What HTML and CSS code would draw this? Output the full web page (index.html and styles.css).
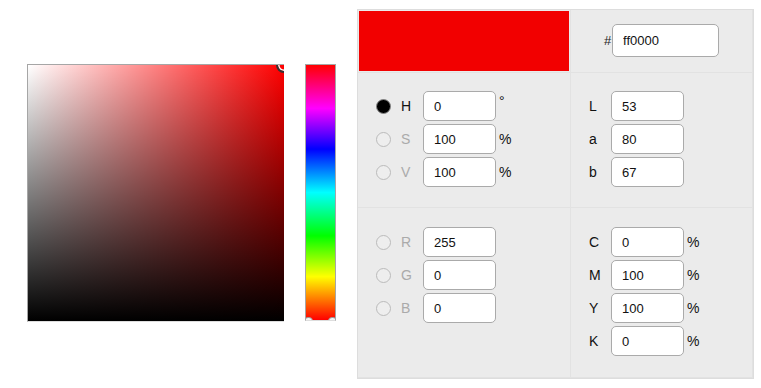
FILE: index.html
```html
<!DOCTYPE html>
<html lang="en">
<head>
    <meta charset="UTF-8">
    <meta name="viewport" content="width=device-width, initial-scale=1.0">
    <title>Color picker</title>
    <link rel="stylesheet" href="styles.css">
</head>
<body>
    <div class="picker">
        <div class="sv-box">
            <span class="sv-marker"></span>
        </div>

        <div class="hue-bar">
            <span class="hue-arrow left"></span>
            <span class="hue-arrow right"></span>
        </div>

        <div class="panel">
            <div class="cell swatch-cell">
                <div class="swatch"></div>
            </div>
            <div class="cell hex-cell">
                <span class="hash">#</span>
                <input class="field hex" type="text" value="ff0000">
            </div>

            <div class="cell group">
                <div class="row">
                    <span class="radio checked"></span>
                    <span class="label">H</span>
                    <input class="field" type="text" value="0">
                    <span class="unit deg">°</span>
                </div>
                <div class="row">
                    <span class="radio"></span>
                    <span class="label off">S</span>
                    <input class="field" type="text" value="100">
                    <span class="unit">%</span>
                </div>
                <div class="row">
                    <span class="radio"></span>
                    <span class="label off">V</span>
                    <input class="field" type="text" value="100">
                    <span class="unit">%</span>
                </div>
            </div>
            <div class="cell group">
                <div class="row">
                    <span class="label">L</span>
                    <input class="field" type="text" value="53">
                </div>
                <div class="row">
                    <span class="label">a</span>
                    <input class="field" type="text" value="80">
                </div>
                <div class="row">
                    <span class="label">b</span>
                    <input class="field" type="text" value="67">
                </div>
            </div>

            <div class="cell group lower">
                <div class="row">
                    <span class="radio"></span>
                    <span class="label off">R</span>
                    <input class="field" type="text" value="255">
                </div>
                <div class="row">
                    <span class="radio"></span>
                    <span class="label off">G</span>
                    <input class="field" type="text" value="0">
                </div>
                <div class="row">
                    <span class="radio"></span>
                    <span class="label off">B</span>
                    <input class="field" type="text" value="0">
                </div>
            </div>
            <div class="cell group lower">
                <div class="row">
                    <span class="label">C</span>
                    <input class="field" type="text" value="0">
                    <span class="unit">%</span>
                </div>
                <div class="row">
                    <span class="label">M</span>
                    <input class="field" type="text" value="100">
                    <span class="unit">%</span>
                </div>
                <div class="row">
                    <span class="label">Y</span>
                    <input class="field" type="text" value="100">
                    <span class="unit">%</span>
                </div>
                <div class="row">
                    <span class="label">K</span>
                    <input class="field" type="text" value="0">
                    <span class="unit">%</span>
                </div>
            </div>
        </div>
    </div>
</body>
</html>
```

FILE: styles.css
```css
body {
    margin: 0;
    font-family: "Liberation Sans", Arial, sans-serif;
    font-size: 13px;
    color: #111;
    background-color: #fff;
}
.picker {
    display: flex;
    align-items: flex-start;
    padding: 9px 0 0 27px;
}
.sv-box {
    position: relative;
    overflow: hidden;
    width: 256px;
    height: 256px;
    margin-top: 55px;
    border-left: 1px solid #a6a6a6;
    border-top: 1px solid #a6a6a6;
    border-bottom: 1px solid #ddd;
    background:
        linear-gradient(to top, #000, rgba(0,0,0,0)),
        linear-gradient(to right, #fff, #f00);
}
.sv-marker {
    position: absolute;
    top: -8px;
    right: -8px;
    width: 12px;
    height: 12px;
    border: 2px solid #333;
    border-radius: 50%;
    box-shadow: inset 0 0 0 1.5px #fff;
}
.hue-bar {
    position: relative;
    overflow: hidden;
    width: 29px;
    height: 255px;
    margin: 55px 0 0 21px;
    border: 1px solid #a6a6a6;
    border-bottom-color: #ddd;
    background: linear-gradient(to bottom, #f00 0%, #f0f 17%, #00f 33%, #0ff 50%, #0f0 67%, #ff0 83%, #f00 100%);
}
.hue-arrow {
    position: absolute;
    bottom: -6px;
    width: 7px;
    height: 7px;
    background-color: #f4f4f4;
    border: 1px solid #999;
    border-radius: 4px 4px 0 0;
}
.hue-arrow.left { left: -2px; }
.hue-arrow.right { right: -2px; }
.panel {
    display: grid;
    grid-template-columns: 213px 182px;
    grid-template-rows: 63px 135px 170px;
    margin-left: 21px;
    background-color: #ebebeb;
    border: 1px solid #ddd;
}
.cell {
    border-right: 1px solid #e2e2e2;
    border-bottom: 1px solid #e2e2e2;
}
.swatch-cell {
    padding: 1px;
}
.swatch {
    height: 100%;
    background-color: #f20000;
}
.hex-cell {
    display: flex;
    align-items: center;
    justify-content: center;
    gap: 1px;
    padding-bottom: 2px;
}
.hash {
    color: #222;
}
.group {
    display: flex;
    flex-direction: column;
    gap: 3px;
    padding: 18px 0 0 18px;
}
.group.lower {
    padding-top: 19px;
}
.row {
    display: flex;
    align-items: center;
    height: 30px;
}
.radio {
    box-sizing: border-box;
    width: 15px;
    height: 15px;
    margin-right: 10px;
    border: 1px solid #bbb;
    border-radius: 50%;
    background-color: #eee;
}
.radio.checked {
    background-color: #000;
    border: 1.5px solid #888;
}
.label {
    width: 22px;
    font-size: 14px;
    color: #111;
}
.label.off {
    color: #aaa;
}
.field {
    box-sizing: border-box;
    width: 73px;
    height: 30px;
    padding: 0 0 0 10px;
    border: 1px solid #aaa;
    border-radius: 5px;
    font-family: inherit;
    font-size: 13px;
    color: #111;
    background-color: #fff;
}
.field.hex {
    width: 107px;
    height: 33px;
}
.unit {
    margin-left: 3px;
    font-size: 14px;
}
.unit.deg {
    align-self: flex-start;
    margin-top: 2px;
}
```
